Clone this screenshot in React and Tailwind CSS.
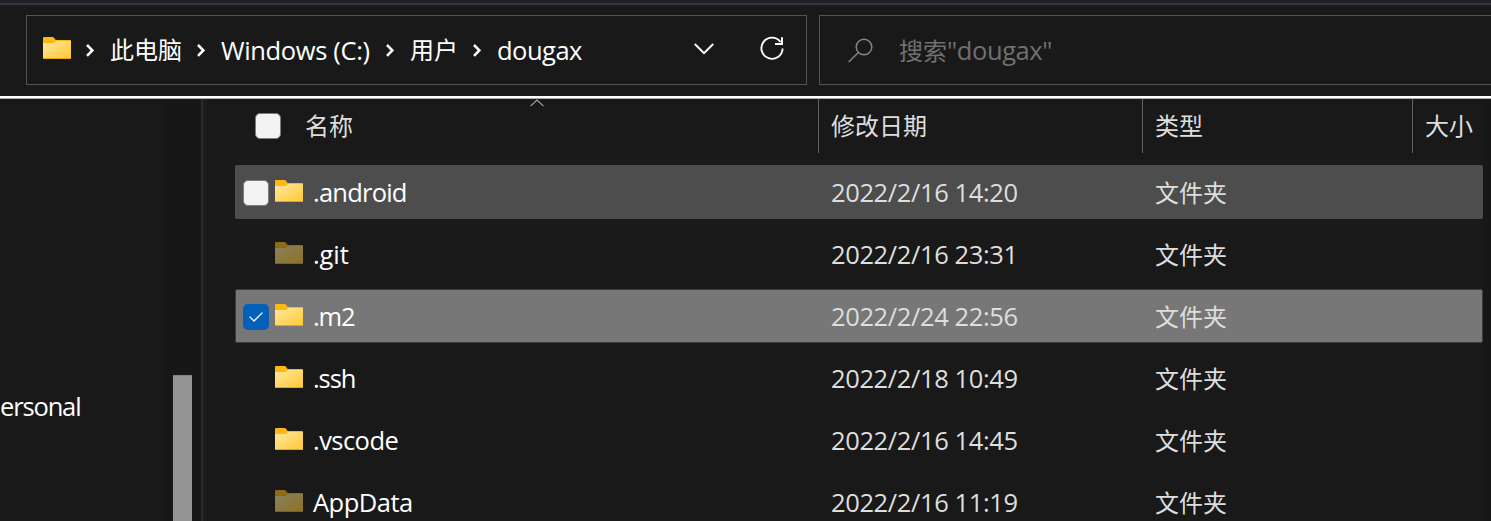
import React from "react";

const rows = [
  { name: ".android", date: "2022/2/16 14:20", state: "hover", tracking: "tracking-[-0.78px]" },
  { name: ".git", date: "2022/2/16 23:31", hidden: true, tracking: "tracking-[-0.1px]" },
  { name: ".m2", date: "2022/2/24 22:56", state: "selected", tracking: "tracking-[-1.1px]" },
  { name: ".ssh", date: "2022/2/18 10:49", tracking: "tracking-[-1.1px]" },
  { name: ".vscode", date: "2022/2/16 14:45", tracking: "tracking-[-0.55px]" },
  { name: "AppData", date: "2022/2/16 11:19", hidden: true, tracking: "tracking-[-0.5px]" },
];

const rowStyle = {
  hover: "bg-[#4d4d4d]",
  selected: "bg-[#777777] border border-[#3c3c3c]",
};

function Folder({ dim }) {
  return (
    <svg width="28" height="22" viewBox="0 0 28 22" className={dim ? "block shrink-0 opacity-50" : "block shrink-0"}>
      <defs>
        <linearGradient id="folder" x1="0" y1="0" x2="1" y2="1">
          <stop offset="0" stopColor="#ffe8a0" />
          <stop offset="1" stopColor="#ffc934" />
        </linearGradient>
      </defs>
      <path d="M0 1Q0 0 1 0H9.5Q10.5 0 11.2 1L12.7 3H27Q28 3 28 4V21Q28 22 27 22H1Q0 22 0 21Z" fill="#fdb813" />
      <path d="M0 6H10Q11 6 12 5L13 4H28V20.5Q28 21.2 27 21.2H1Q0 21.2 0 20.5Z" fill="url(#folder)" />
      <path d="M0 21H28V21Q28 22 27 22H1Q0 22 0 21Z" fill="#eca50f" />
    </svg>
  );
}

function Chevron() {
  return (
    <svg width="8" height="13" viewBox="0 0 8 13" fill="none" stroke="#fff" strokeWidth="2.5" className="block shrink-0">
      <path d="M1 1L6.3 6.4L1 11.8" />
    </svg>
  );
}

function Check({ state }) {
  if (state === "selected")
    return (
      <span className="flex size-[26px] items-center justify-center rounded-[5px] bg-[#0560b9]">
        <svg width="14" height="10" viewBox="0 0 14 10" fill="none" stroke="#fff" strokeWidth="1.3">
          <path d="M0.6 4.6L5 9L13.4 0.6" />
        </svg>
      </span>
    );
  return <span className="block size-[26px] rounded-[5px] border border-[#7c7c7c] bg-[#f3f3f3]" />;
}

function Header({ children, className }) {
  return <div className={"h-[54px] shrink-0 border-l border-[#636363] pl-3 leading-[54px] " + className}>{children}</div>;
}

export default function App() {
  return (
    <div className="flex h-[521px] w-[1491px] flex-col overflow-hidden bg-[#191919] font-['Open_Sans','Noto_Sans_CJK_SC',sans-serif] text-2xl whitespace-nowrap text-white">
      <div className="h-[5px] shrink-0 border-b-2 border-[#363638] bg-[#1f1f2a]" />
      <div className="flex h-[91px] shrink-0 gap-3 pt-2.5 pl-[26px]">
        <div className="flex h-[70px] w-[781px] shrink-0 items-center border border-[#535353] pl-4">
          <div className="-mt-1"><Folder /></div>
          <div className="ml-[15px]"><Chevron /></div>
          <span className="ml-4 w-[72px]">此电脑</span>
          <div className="ml-[15px]"><Chevron /></div>
          <span className="ml-4 w-[149px] pb-px text-[25.5px] tracking-[-0.35px]">Windows (C:)</span>
          <div className="ml-4"><Chevron /></div>
          <span className="ml-4 w-12">用户</span>
          <div className="ml-[15px]"><Chevron /></div>
          <span className="ml-4 w-[85px] pb-px text-[25.5px] tracking-[-0.5px]">dougax</span>
          <svg width="20" height="12" viewBox="0 0 20 12" fill="none" stroke="#fff" strokeWidth="2" className="mt-[-3px] ml-[112px] block">
            <path d="M0.8 1L10 10.2L19.2 1" />
          </svg>
          <svg width="24" height="24" viewBox="0 0 24 24" fill="none" stroke="#fff" strokeWidth="1.9" className="-mt-1 ml-[46px] block">
            <path d="M20.6 6A10.6 10.6 0 1 0 22.6 12.5M22 1.2V8H15" />
          </svg>
        </div>
        <div className="flex h-[70px] flex-1 items-center border-y border-l border-[#535353] pl-7 text-[#707070]">
          <svg width="26" height="25" viewBox="0 0 26 25" fill="none" stroke="#858585" strokeWidth="1.5" className="block">
            <circle cx="16" cy="9" r="7.8" />
            <path d="M10.4 14.5L0.7 24" />
          </svg>
          <span className="ml-[25px] pb-px">搜索<span className="text-[25.5px] tracking-[-0.4px]">"dougax"</span></span>
        </div>
      </div>
      <div className="h-[3px] shrink-0 border-b border-[#a9b0ac] bg-white" />
      <div className="flex min-h-0 flex-1">
        <div className="w-[165px] shrink-0 pt-[289px] leading-9"><span className="text-[25.5px] tracking-[-1.15px]">ersonal</span></div>
        <div className="flex w-9 shrink-0 bg-[#171717] pt-[276px] pl-2">
          <div className="w-[19px] border-t border-[#857f80] bg-[#949494]" />
        </div>
        <div className="w-1.5 shrink-0 border-l-2 border-[#2b2b2b] bg-[#1d1d1d]" />
        <div className="min-w-0 flex-1 pl-7">
          <div className="flex h-[62px] text-[#dedede]">
            <div className="relative flex h-[54px] w-[583px] shrink-0 items-center pl-5">
              <Check />
              <span className="ml-6">名称</span>
              <svg width="14" height="8" viewBox="0 0 14 8" fill="none" stroke="#a5a5a5" strokeWidth="1.1" className="absolute top-0 left-[295px]">
                <path d="M0.5 7.2L7 1L13.5 7.2" />
              </svg>
            </div>
            <Header className="w-[324px]">修改日期</Header>
            <Header className="w-[270px]">类型</Header>
            <Header className="w-[78px]">大小</Header>
          </div>
          {rows.map((r) => (
            <div key={r.name} className="flex h-[62px] items-center">
              <div className={"flex h-[54px] w-[1248px] shrink-0 items-center rounded-[2px] " + (rowStyle[r.state] || "")}>
                <div className={r.state === "selected" ? "ml-[7px] w-8 pt-0.5" : "ml-2 w-8 pt-px"}>{r.state && <Check state={r.state} />}</div>
                <div className="-mt-0.5"><Folder dim={r.hidden} /></div>
                <span className={"ml-2.5 w-[518px] pb-px text-[25.5px] " + r.tracking}>{r.name}</span>
                <span className="w-[324px] pb-px text-[25.5px] tracking-[-0.38px] text-[#dedede]">{r.date}</span>
                <span className="pt-0.5 text-[#dedede]">文件夹</span>
              </div>
            </div>
          ))}
        </div>
        <div className="w-2 shrink-0 bg-[#171717]" />
      </div>
    </div>
  );
}
